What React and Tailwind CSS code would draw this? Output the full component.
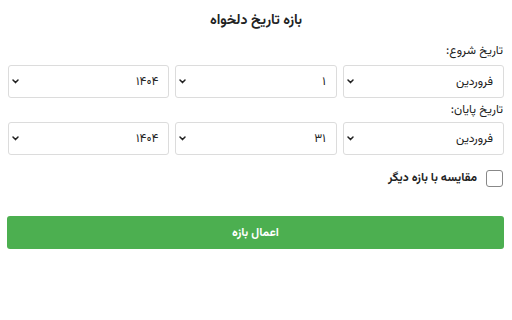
import React from "react";

const Chevron = () => (
  <svg width="7" height="5" viewBox="0 0 7 5" className="shrink-0">
    <path d="M1 1 L3.5 3.6 L6 1" fill="none" stroke="#222" strokeWidth="1.5" strokeLinecap="round" strokeLinejoin="round" />
  </svg>
);

const Select = ({ value }) => (
  <div className="flex-1 h-[33px] flex items-center justify-between border border-[#dcdcdc] rounded-[3px] bg-white pr-[10px] pl-[3px]">
    <span className="text-[12px] text-[#222]">{value}</span>
    <Chevron />
  </div>
);

export default function App() {
  return (
    <div
      dir="rtl"
      className="w-[512px] h-[320px] bg-white px-[8px] pt-[10px] text-[#222]"
      style={{ fontFamily: "Vazirmatn, 'Noto Sans Arabic', 'DejaVu Sans', sans-serif" }}
    >
      <div className="text-center text-[14px] font-bold h-[22px] leading-[22px]">بازه تاریخ دلخواه</div>
      <div className="mt-[9px] text-[12px] leading-[20px] pr-[1px]">تاریخ شروع:</div>
      <div className="flex gap-[6px] mt-[4px]">
        <Select value="فروردین" />
        <Select value="۱" />
        <Select value="۱۴۰۴" />
      </div>
      <div className="mt-[2px] text-[12px] leading-[20px] pr-[1px]">تاریخ پایان:</div>
      <div className="flex gap-[6px] mt-[2px]">
        <Select value="فروردین" />
        <Select value="۳۱" />
        <Select value="۱۴۰۴" />
      </div>
      <div className="flex items-center gap-[9px] mt-[14px] pr-[1px]">
        <div className="w-[17px] h-[17px] border border-[#888] rounded-[3px] bg-white" />
        <span className="text-[12px] font-bold">مقایسه با بازه دیگر</span>
      </div>
      <button className="w-[497px] h-[33px] mt-[29px] bg-[#4caf50] text-white text-[12px] font-bold rounded-[3px] flex items-center justify-center">
        اعمال بازه
      </button>
    </div>
  );
}
